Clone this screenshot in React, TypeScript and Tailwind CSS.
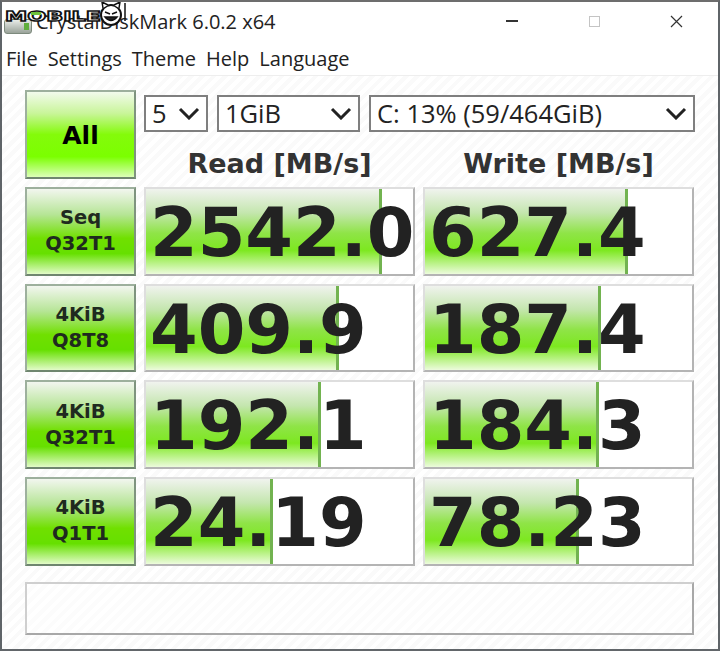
const rows = [
  { top: "Seq", bottom: "Q32T1", read: "2542.0", readFill: "w-[236px]", write: "627.4", writeFill: "w-[203px]" },
  { top: "4KiB", bottom: "Q8T8", read: "409.9", readFill: "w-[193px]", write: "187.4", writeFill: "w-[176px]" },
  { top: "4KiB", bottom: "Q32T1", read: "192.1", readFill: "w-[175px]", write: "184.3", writeFill: "w-[174px]" },
  { top: "4KiB", bottom: "Q1T1", read: "24.19", readFill: "w-[127px]", write: "78.23", writeFill: "w-[154px]" },
];

const buttonBase =
  "flex flex-col items-center justify-center border-2 border-[#9db09d] border-r-[#7f947f] border-b-[#6f866f] font-['DejaVu_Sans'] font-bold";

const Chevron = () => (
  <svg width="22" height="13" viewBox="0 0 22 13" fill="none" stroke="#222" strokeWidth="3">
    <path d="M2 2 L11 11 L20 2" />
  </svg>
);

const Select = ({ text, className }: { text: string; className: string }) => (
  <div className={`flex h-[37px] items-center justify-between border-2 border-[#7f7f7f] bg-white px-[6px] font-['Open_Sans'] text-[25.5px] text-[#222] ${className}`}>
    <span className="leading-none">{text}</span>
    <Chevron />
  </div>
);

const Meter = ({ value, fill }: { value: string; fill: string }) => (
  <div className="relative h-[88.67px] w-[271px] overflow-hidden border-2 border-[#dedede] border-r-[#b4b4b4] border-b-[#b4b4b4] bg-white">
    <div className={`absolute inset-y-0 left-0 border-r-[3px] border-r-[#72b350] bg-[linear-gradient(180deg,#f0f3ee_0%,#c4e6ae_28%,#8fe447_52%,#7de820_72%,#ecfbdc_100%)] ${fill}`} />
    <div className="relative whitespace-nowrap pl-[4px] font-['DejaVu_Sans'] text-[68.5px] font-bold leading-[86px] text-[#222]">
      {value}
    </div>
  </div>
);

const App = () => {
  return (
    <div className="relative h-[651px] w-[720px] overflow-hidden border-2 border-x-[#5f6468] border-t-[#6d6d6d] border-b-[#62666a] bg-white font-['Open_Sans'] text-[#222]">
      {/* watermark */}
      <div className="absolute left-[1px] top-[-2px] z-10 flex items-center">
        <svg width="124" height="28" viewBox="0 0 124 28">
          <text x="2" y="20.5" textLength="96" lengthAdjust="spacingAndGlyphs" fontFamily="DejaVu Sans" fontWeight="700" fontSize="14" fill="#fff" stroke="#111" strokeWidth="1.3">MOBILE</text>
          <rect x="28" y="12" width="10" height="3" fill="#6fc23a" />
          <circle cx="108" cy="15" r="10" fill="#fff" stroke="#111" strokeWidth="2" />
          <path d="M100 8 L99 2 L105 5 M116 8 L117 2 L111 5" fill="#fff" stroke="#111" strokeWidth="1.5" />
          <path d="M102 12 L107 14 M114 12 L109 14 M102 17 Q108 24 114 17 Z" fill="#222" stroke="#111" strokeWidth="1.5" />
          <path d="M122 3 V21" stroke="#111" strokeWidth="1.5" />
        </svg>
      </div>
      <div className="absolute left-[124px] top-[-2px] h-[2px] w-[78px] bg-[#4b3a78]" />

      {/* title bar */}
      <div className="flex h-[38px] items-center">
        <div className="ml-[2px] mt-[10px] flex h-[15px] w-[28px] items-center justify-end rounded-[3px] border border-[#7d8a7d] bg-[linear-gradient(180deg,#e8ece8,#9aa39a)] pr-[2px]">
          <div className="h-[7px] w-[5px] bg-[#5fae3c]" />
        </div>
        <div className="ml-[4px] pt-[2px] text-[20px] leading-none">CrystalDiskMark 6.0.2 x64</div>
        <div className="ml-auto flex items-center pr-[35px]">
          <div className="h-[2px] w-[12px] bg-[#333]" />
          <div className="ml-[71px] h-[11px] w-[11px] border border-[#c4c4c4]" />
          <svg className="ml-[70px]" width="13" height="13" viewBox="0 0 13 13" stroke="#333" strokeWidth="1.2">
            <path d="M1 1 L12 12 M12 1 L1 12" />
          </svg>
        </div>
      </div>

      {/* menu */}
      <div className="flex h-[35px] items-center gap-[10px] pl-[4px] pt-[3px] text-[20px] leading-none text-[#222]">
        <span>File</span>
        <span>Settings</span>
        <span>Theme</span>
        <span>Help</span>
        <span>Language</span>
      </div>

      {/* main */}
      <div className="h-[574px] border-t border-t-[#eeeeee] bg-[repeating-linear-gradient(135deg,#ffffff_0px,#ffffff_4px,#fafafa_4px,#fafafa_8px)] pl-[23px] pt-[14px]">
        <div className="flex gap-[8px]">
          <div className={`${buttonBase} h-[89px] w-[111px] bg-[linear-gradient(180deg,#f2fbec_0%,#c9f59a_25%,#84fb0a_50%,#7bff00_76%,#dcffb8_100%)] pt-[3px] text-[25px] text-black`}>All</div>
          <div className="flex flex-col pt-[5px]">
            <div className="flex gap-[9px]">
              <Select text="5" className="w-[64px]" />
              <Select text="1GiB" className="w-[143px]" />
              <Select text="C: 13% (59/464GiB)" className="w-[326px]" />
            </div>
            <div className="flex pt-[14px] font-['DejaVu_Sans'] text-[27px] font-bold leading-[36px] text-[#333]">
              <div className="w-[271px] text-center">Read [MB/s]</div>
              <div className="ml-[8px] w-[271px] text-center">Write [MB/s]</div>
            </div>
          </div>
        </div>

        <div className="mt-[5px] flex flex-col gap-[8px]">
          {rows.map((row) => (
            <div key={row.top + row.bottom} className="flex gap-[8px]">
              <div className={`${buttonBase} h-[88.67px] w-[111px] bg-[linear-gradient(180deg,#f2f6ef_0%,#b6e596_30%,#70e000_58%,#66e000_76%,#e2fbc8_100%)] text-[19.5px] leading-[26px] text-[#1f2a1f]`}>
                <span>{row.top}</span>
                <span>{row.bottom}</span>
              </div>
              <Meter value={row.read} fill={row.readFill} />
              <Meter value={row.write} fill={row.writeFill} />
            </div>
          ))}
        </div>

        {/* comment box */}
        <div className="mt-[16px] h-[53px] w-[669px] border-2 border-[#cfcfcf] border-r-[#a8a8a8] border-b-[#a8a8a8] bg-[repeating-linear-gradient(135deg,#ffffff_0px,#ffffff_4px,#fcfcfc_4px,#fcfcfc_8px)]" />
      </div>
    </div>
  );
};

export default App;
